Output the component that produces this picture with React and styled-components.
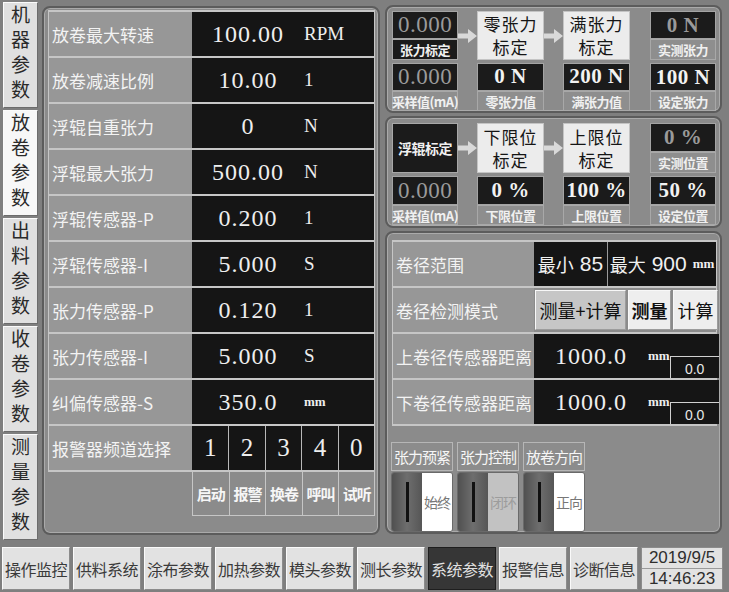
import styled, { createGlobalStyle } from 'styled-components'

const CJK = `"Noto Sans CJK SC", "Noto Sans", sans-serif`
const SERIF = `"Liberation Serif", "Noto Sans CJK SC", serif`
const SANS = `"Liberation Sans", "Noto Sans CJK SC", sans-serif`

const GlobalStyle = createGlobalStyle`
	html, body {
		margin: 0;
		padding: 0;
		background: #7f7f7f;
	}
	* {
		box-sizing: border-box;
	}
`

const Screen = styled.div`
	width: 729px;
	height: 592px;
	background: #7f7f7f;
	display: flex;
	flex-direction: column;
	overflow: hidden;
	font-family: ${CJK};
`

const Main = styled.div`
	display: flex;
	height: 541px;
	padding: 2px 0 0 3px;
`

const TabColumn = styled.div`
	display: flex;
	flex-direction: column;
	gap: 2px;
	width: 35px;
`

const Tab = styled.div`
	height: 106px;
	background: ${p => (p.$active ? '#f7f7f7' : '#e0e0e0')};
	border: 1px solid;
	border-color: #fbfbfb #6c6c6c #6c6c6c #fbfbfb;
	display: flex;
	align-items: center;
	justify-content: center;
`

const TabText = styled.span`
	writing-mode: vertical-rl;
	letter-spacing: 6px;
	font-size: 19px;
	line-height: 1;
	color: #2a2a2a;
`

const Panel = styled.div`
	background: #8b8b8b;
	border: 2px solid #5c5c5c;
	border-radius: 8px;
	box-shadow: inset 0 0 0 1px #aaaaaa;
`

const LeftPanel = styled(Panel)`
	width: 338px;
	height: 529px;
	margin: 4px 0 0 4px;
	padding: 2px 3px 0 4px;
`

const ParamTable = styled.div`
	border-left: 1px solid #c6c6c6;
	border-right: 1px solid #c6c6c6;
	border-bottom: 2px solid #c6c6c6;
`

const ParamRow = styled.div`
	display: grid;
	grid-template-columns: ${p => p.$labelWidth || 143}px 1fr;
	height: 46px;
	border-top: 2px solid #c6c6c6;
`

const RowLabel = styled.div`
	background: #979797;
	color: #f3f3f3;
	font-size: 17px;
	display: flex;
	align-items: center;
	padding-left: 3px;
	white-space: nowrap;
	overflow: hidden;
`

const DarkCell = styled.div`
	background: #151515;
	display: flex;
	align-items: center;
	color: #eeeeee;
`

const Value = styled.span`
	width: ${p => p.$width || 112}px;
	text-align: center;
	font-family: ${SERIF};
	font-size: 24px;
	letter-spacing: 1px;
`

const Unit = styled.span`
	font-family: ${SERIF};
	font-size: ${p => (p.$small ? 13 : 19)}px;
	font-weight: ${p => (p.$small ? 700 : 400)};
`

const ChannelGrid = styled.div`
	display: grid;
	grid-template-columns: repeat(5, 1fr);
	background: #151515;
`

const ChannelCell = styled.div`
	display: flex;
	align-items: center;
	justify-content: center;
	border-left: 1px solid #b8b8b8;
	font-family: ${SERIF};
	font-size: 25px;
	color: #eeeeee;
	&:first-child {
		border-left: none;
	}
`

const ChannelLabels = styled.div`
	display: grid;
	grid-template-columns: repeat(5, 1fr);
	margin-left: 144px;
	height: 44px;
`

const ChannelLabel = styled.div`
	display: flex;
	align-items: center;
	justify-content: center;
	border-left: 1px solid #c6c6c6;
	border-bottom: 1px solid #c6c6c6;
	color: #f6f6f6;
	font-size: 15px;
	font-weight: 700;
	letter-spacing: -1px;
	white-space: nowrap;
	&:last-child {
		border-right: 1px solid #c6c6c6;
	}
`

const RightColumn = styled.div`
	width: 337px;
	margin: 3px 0 0 5px;
	display: flex;
	flex-direction: column;
	gap: 3px;
`

const CalibPanel = styled(Panel)`
	height: ${p => p.$height}px;
	padding: ${p => p.$top}px 0 0 5px;
	display: flex;
`

const CalibColumn = styled.div`
	width: ${p => p.$width}px;
	display: flex;
	flex-direction: column;
`

const ArrowColumn = styled.div`
	width: ${p => p.$width}px;
	height: 50px;
	display: flex;
	align-items: center;
	justify-content: center;
`

const ValueBox = styled.div`
	height: 29px;
	background: #1b1b1b;
	border: 1px solid #a4a4a4;
	display: flex;
	align-items: center;
	justify-content: center;
	color: ${p => (p.$dim ? '#9a9a9a' : '#f2f2f2')};
	font-family: ${SERIF};
	font-size: ${p => (p.$bold ? 21 : 23)}px;
	font-weight: ${p => (p.$bold ? 700 : 400)};
	letter-spacing: 0.5px;
	white-space: pre;
	margin-top: ${p => (p.$gap ? 3 : 0)}px;
`

const LabelBox = styled.div`
	height: ${p => p.$height || 20}px;
	background: ${p => (p.$dark ? '#1b1b1b' : '#8e8e8e')};
	border: 1px solid #a8a8a8;
	display: flex;
	align-items: center;
	justify-content: center;
	color: #f0f0f0;
	font-size: ${p => p.$size || 13}px;
	font-weight: 700;
	letter-spacing: -0.5px;
	white-space: nowrap;
`

const CalibButton = styled.div`
	height: 50px;
	background: #ececec;
	border: 1px solid #c4c4c4;
	display: flex;
	flex-direction: column;
	align-items: center;
	justify-content: center;
	color: #151515;
	font-size: 17px;
	line-height: 23px;
	letter-spacing: 1px;
`

const DiameterPanel = styled(Panel)`
	height: 303px;
	padding: 7px 3px 0 5px;
`

const SplitCell = styled.div`
	display: grid;
	grid-template-columns: 73px 1fr;
	background: #151515;
`

const RangeText = styled.div`
	display: flex;
	align-items: center;
	justify-content: center;
	gap: 6px;
	color: #f0f0f0;
	font-size: 18px;
	border-left: ${p => (p.$divider ? '1px solid #9a9a9a' : 'none')};
	white-space: nowrap;
`

const RangeNumber = styled.span`
	font-family: ${SANS};
	font-size: 21px;
`

const ModeCell = styled.div`
	display: flex;
	gap: 2px;
	padding: 2px 0 2px 1px;
`

const ModeButton = styled.div`
	width: ${p => p.$width}px;
	background: ${p => (p.$pressed ? '#c6c6c6' : '#eeeeee')};
	border: 1px solid;
	border-color: #f8f8f8 #9c9c9c #9c9c9c #f8f8f8;
	display: flex;
	align-items: center;
	justify-content: center;
	color: #111111;
	font-size: 18px;
	font-weight: ${p => (p.$bold ? 700 : 400)};
	white-space: nowrap;
`

const OffsetBox = styled.div`
	align-self: flex-end;
	margin-left: auto;
	width: 49px;
	height: 22px;
	border-top: 1px solid #d0d0d0;
	border-left: 1px solid #d0d0d0;
	display: flex;
	align-items: flex-end;
	justify-content: center;
	color: #e8e8e8;
	font-family: ${SANS};
	font-size: 14px;
	padding-bottom: 1px;
`

const SwitchRow = styled.div`
	display: flex;
	gap: 4px;
	margin: 16px 0 0 -1px;
`

const SwitchGroup = styled.div`
	width: 62px;
	display: flex;
	flex-direction: column;
	gap: 1px;
`

const SwitchTitle = styled.div`
	height: 29px;
	border: 1px solid #b6b6b6;
	background: #8c8c8c;
	color: #f6f6f6;
	font-size: 15px;
	display: flex;
	align-items: center;
	justify-content: center;
	letter-spacing: -1px;
	white-space: nowrap;
`

const SwitchBody = styled.div`
	height: 60px;
	display: flex;
	border-radius: 3px;
	overflow: hidden;
	border: 1px solid #6a6a6a;
`

const SwitchKnob = styled.div`
	width: 30px;
	background: linear-gradient(90deg, #505050, #6e6e6e 50%, #565656);
	display: flex;
	align-items: center;
	justify-content: center;
	&::after {
		content: '';
		width: 3px;
		height: 40px;
		background: #111111;
	}
`

const SwitchFace = styled.div`
	flex: 1;
	background: ${p => (p.$off ? '#c2c2c2' : '#ffffff')};
	color: ${p => (p.$off ? '#9c9c9c' : '#777777')};
	font-size: 14px;
	display: flex;
	align-items: center;
	justify-content: center;
	letter-spacing: -1px;
	white-space: nowrap;
`

const NavBar = styled.div`
	display: flex;
	gap: 3px;
	padding: 6px 0 0 2px;
	height: 51px;
`

const NavButton = styled.div`
	width: 68px;
	height: 43px;
	background: ${p => (p.$active ? '#363636' : '#e2e2e2')};
	border: 1px solid;
	border-color: ${p => (p.$active ? '#1e1e1e' : '#fafafa #8c8c8c #8c8c8c #fafafa')};
	color: ${p => (p.$active ? '#e0e0e0' : '#3a3a3a')};
	font-size: 16px;
	display: flex;
	align-items: center;
	justify-content: center;
	letter-spacing: -0.5px;
	white-space: nowrap;
`

const Clock = styled.div`
	width: 82px;
	height: 43px;
	display: flex;
	flex-direction: column;
	background: #e2e2e2;
	border: 1px solid #8c8c8c;
`

const ClockLine = styled.div`
	flex: 1;
	display: flex;
	align-items: center;
	justify-content: center;
	font-family: ${SANS};
	font-size: 17px;
	color: #2e2e2e;
	& + & {
		border-top: 1px solid #9a9a9a;
	}
`

const Arrow = () => (
	<svg width="19" height="14" viewBox="0 0 19 14">
		<path d="M0 4.5 H10 V0 L19 7 L10 14 V9.5 H0 Z" fill="#d9d9d9" />
	</svg>
)

const params = [
	{ label: '放卷最大转速', value: '100.00', unit: 'RPM' },
	{ label: '放卷减速比例', value: '10.00', unit: '1' },
	{ label: '浮辊自重张力', value: '0', unit: 'N' },
	{ label: '浮辊最大张力', value: '500.00', unit: 'N' },
	{ label: '浮辊传感器-P', value: '0.200', unit: '1' },
	{ label: '浮辊传感器-I', value: '5.000', unit: 'S' },
	{ label: '张力传感器-P', value: '0.120', unit: '1' },
	{ label: '张力传感器-I', value: '5.000', unit: 'S' },
	{ label: '纠偏传感器-S', value: '350.0', unit: 'mm', small: true },
]

const channels = ['1', '2', '3', '4', '0']
const channelNames = ['启动', '报警', '换卷', '呼叫', '试听']
const tabs = ['机器参数', '放卷参数', '出料参数', '收卷参数', '测量参数']
const navItems = ['操作监控', '供料系统', '涂布参数', '加热参数', '模头参数', '测长参数', '系统参数', '报警信息', '诊断信息']

const App = () => {
	return (
		<Screen>
			<GlobalStyle />
			<Main>
				<TabColumn>
					{tabs.map(t => (
						<Tab key={t} $active={t === '放卷参数'}>
							<TabText>{t}</TabText>
						</Tab>
					))}
				</TabColumn>

				<LeftPanel>
					<ParamTable>
						{params.map(p => (
							<ParamRow key={p.label}>
								<RowLabel>{p.label}</RowLabel>
								<DarkCell>
									<Value>{p.value}</Value>
									<Unit $small={p.small}>{p.unit}</Unit>
								</DarkCell>
							</ParamRow>
						))}
						<ParamRow>
							<RowLabel>报警器频道选择</RowLabel>
							<ChannelGrid>
								{channels.map(c => (
									<ChannelCell key={c}>{c}</ChannelCell>
								))}
							</ChannelGrid>
						</ParamRow>
					</ParamTable>
					<ChannelLabels>
						{channelNames.map(n => (
							<ChannelLabel key={n}>{n}</ChannelLabel>
						))}
					</ChannelLabels>
				</LeftPanel>

				<RightColumn>
					<CalibPanel $height={108} $top={4}>
						<CalibColumn $width={66}>
							<ValueBox $dim>0.000</ValueBox>
							<LabelBox $dark $height={21}>张力标定</LabelBox>
							<ValueBox $dim $gap>0.000</ValueBox>
							<LabelBox>采样值(mA)</LabelBox>
						</CalibColumn>
						<ArrowColumn $width={19}><Arrow /></ArrowColumn>
						<CalibColumn $width={67}>
							<CalibButton><span>零张力</span><span>标定</span></CalibButton>
							<ValueBox $bold $gap>0 N</ValueBox>
							<LabelBox>零张力值</LabelBox>
						</CalibColumn>
						<ArrowColumn $width={19}><Arrow /></ArrowColumn>
						<CalibColumn $width={67}>
							<CalibButton><span>满张力</span><span>标定</span></CalibButton>
							<ValueBox $bold $gap>200 N</ValueBox>
							<LabelBox>满张力值</LabelBox>
						</CalibColumn>
						<ArrowColumn $width={20} />
						<CalibColumn $width={66}>
							<ValueBox $dim $bold>0 N</ValueBox>
							<LabelBox $height={21}>实测张力</LabelBox>
							<ValueBox $bold $gap>100 N</ValueBox>
							<LabelBox>设定张力</LabelBox>
						</CalibColumn>
					</CalibPanel>

					<CalibPanel $height={112} $top={5}>
						<CalibColumn $width={66}>
							<LabelBox $dark $height={50} $size={14}>浮辊标定</LabelBox>
							<ValueBox $dim $gap>0.000</ValueBox>
							<LabelBox>采样值(mA)</LabelBox>
						</CalibColumn>
						<ArrowColumn $width={19}><Arrow /></ArrowColumn>
						<CalibColumn $width={67}>
							<CalibButton><span>下限位</span><span>标定</span></CalibButton>
							<ValueBox $bold $gap>0 %</ValueBox>
							<LabelBox>下限位置</LabelBox>
						</CalibColumn>
						<ArrowColumn $width={19}><Arrow /></ArrowColumn>
						<CalibColumn $width={67}>
							<CalibButton><span>上限位</span><span>标定</span></CalibButton>
							<ValueBox $bold $gap>100 %</ValueBox>
							<LabelBox>上限位置</LabelBox>
						</CalibColumn>
						<ArrowColumn $width={20} />
						<CalibColumn $width={66}>
							<ValueBox $dim $bold>0 %</ValueBox>
							<LabelBox $height={21}>实测位置</LabelBox>
							<ValueBox $bold $gap>50 %</ValueBox>
							<LabelBox>设定位置</LabelBox>
						</CalibColumn>
					</CalibPanel>

					<DiameterPanel>
						<ParamTable>
							<ParamRow $labelWidth={141}>
								<RowLabel>卷径范围</RowLabel>
								<SplitCell>
									<RangeText>最小<RangeNumber>85</RangeNumber></RangeText>
									<RangeText $divider>
										最大<RangeNumber>900</RangeNumber><Unit $small>mm</Unit>
									</RangeText>
								</SplitCell>
							</ParamRow>
							<ParamRow $labelWidth={141}>
								<RowLabel>卷径检测模式</RowLabel>
								<ModeCell>
									<ModeButton $width={91} $pressed>测量+计算</ModeButton>
									<ModeButton $width={43} $bold>测量</ModeButton>
									<ModeButton $width={45}>计算</ModeButton>
								</ModeCell>
							</ParamRow>
							<ParamRow $labelWidth={141}>
								<RowLabel>上卷径传感器距离</RowLabel>
								<DarkCell>
									<Value $width={114}>1000.0</Value>
									<Unit $small>mm</Unit>
									<OffsetBox>0.0</OffsetBox>
								</DarkCell>
							</ParamRow>
							<ParamRow $labelWidth={141}>
								<RowLabel>下卷径传感器距离</RowLabel>
								<DarkCell>
									<Value $width={114}>1000.0</Value>
									<Unit $small>mm</Unit>
									<OffsetBox>0.0</OffsetBox>
								</DarkCell>
							</ParamRow>
						</ParamTable>

						<SwitchRow>
							<SwitchGroup>
								<SwitchTitle>张力预紧</SwitchTitle>
								<SwitchBody>
									<SwitchKnob />
									<SwitchFace>始终</SwitchFace>
								</SwitchBody>
							</SwitchGroup>
							<SwitchGroup>
								<SwitchTitle>张力控制</SwitchTitle>
								<SwitchBody>
									<SwitchKnob />
									<SwitchFace $off>闭环</SwitchFace>
								</SwitchBody>
							</SwitchGroup>
							<SwitchGroup>
								<SwitchTitle>放卷方向</SwitchTitle>
								<SwitchBody>
									<SwitchKnob />
									<SwitchFace>正向</SwitchFace>
								</SwitchBody>
							</SwitchGroup>
						</SwitchRow>
					</DiameterPanel>
				</RightColumn>
			</Main>

			<NavBar>
				{navItems.map(n => (
					<NavButton key={n} $active={n === '系统参数'}>{n}</NavButton>
				))}
				<Clock>
					<ClockLine>2019/9/5</ClockLine>
					<ClockLine>14:46:23</ClockLine>
				</Clock>
			</NavBar>
		</Screen>
	)
}

export default App
